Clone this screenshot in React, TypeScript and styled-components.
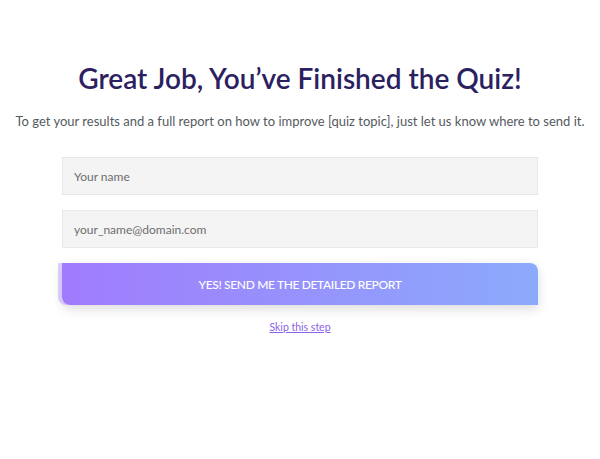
import React from "react";
import styled, { createGlobalStyle } from "styled-components";

const Global = createGlobalStyle`
  html, body { margin: 0; padding: 0; background: #ffffff; }
  body { font-family: Lato, "Open Sans", sans-serif; }
`;

const Page = styled.main`
  width: 600px;
  display: flex;
  flex-direction: column;
  align-items: center;
  padding-top: 58px;
  box-sizing: border-box;
`;

const Title = styled.h1`
  margin: 0;
  font-family: Lato, sans-serif;
  font-weight: 600;
  font-size: 28px;
  line-height: 40px;
  color: #2b2160;
`;

const Lead = styled.p`
  margin: 13px 0 0;
  font-size: 13px;
  line-height: 20px;
  color: #555a60;
  white-space: nowrap;
`;

const Form = styled.form`
  width: 476px;
  margin-top: 26px;
  display: flex;
  flex-direction: column;
  gap: 15px;
`;

const Field = styled.input`
  box-sizing: border-box;
  width: 100%;
  height: 38px;
  padding: 0 11px;
  border: 1px solid #e8e8e8;
  background: #f4f4f4;
  font-family: Lato, sans-serif;
  font-size: 12px;
  color: #555;
  outline: none;
  &::placeholder { color: #6e6e6e; }
`;

const Submit = styled.button`
  height: 42px;
  border: none;
  border-radius: 0 8px 0 8px;
  background: linear-gradient(90deg, #a07bfd 0%, #8caafb 100%);
  box-shadow: -4px 0 0 rgba(180, 150, 250, 0.45), 0 4px 12px rgba(0, 0, 0, 0.14);
  color: #ffffff;
  font-family: Lato, sans-serif;
  font-weight: 500;
  font-size: 12px;
  letter-spacing: -0.35px;
  text-transform: uppercase;
  cursor: pointer;
`;

const Skip = styled.a`
  margin-top: 16px;
  font-size: 10.5px;
  color: #8a63e6;
  text-decoration: underline;
  font-family: Lato, sans-serif;
`;

export default function App() {
  return (
    <>
      <Global />
      <Page>
        <Title>Great Job, You’ve Finished the Quiz!</Title>
        <Lead>
          To get your results and a full report on how to improve [quiz topic], just let us know where to send it.
        </Lead>
        <Form onSubmit={(e) => e.preventDefault()}>
          <Field type="text" placeholder="Your name" />
          <Field type="email" placeholder="your_name@domain.com" />
          <Submit type="submit">Yes! Send me the detailed report</Submit>
        </Form>
        <Skip href="#">Skip this step</Skip>
      </Page>
    </>
  );
}
